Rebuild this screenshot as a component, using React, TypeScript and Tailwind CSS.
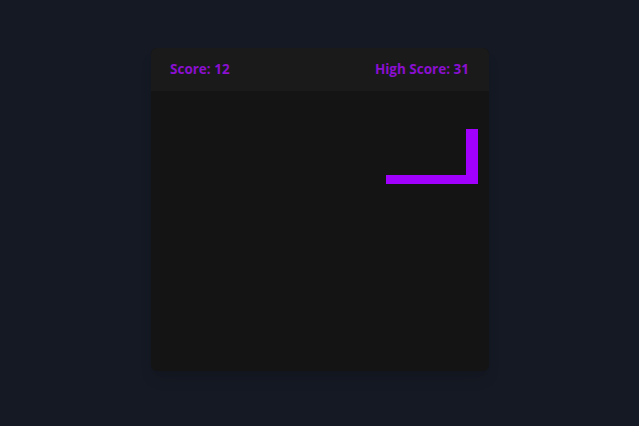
export default function App() {
  return (
    <div className="flex h-[426px] w-[639px] items-start justify-center bg-[#151923] pt-[48px] font-['Open_Sans',sans-serif]">
      <div className="ml-[1px] flex h-[323px] w-[338px] flex-col overflow-hidden rounded-md bg-[#141414] shadow-lg">
        {/* Header */}
        <div className="flex h-[43px] items-center justify-between bg-[#1a1a1a] pl-[19px] pr-[20px] text-[13.5px] font-bold text-[#8a0fd0]">
          <span>Score: 12</span>
          <span>High Score: 31</span>
        </div>
        {/* Board */}
        <div className="relative flex-1">
          <div className="absolute left-[315px] top-[38px] h-[55px] w-[12px] bg-[#a100ff]" />
          <div className="absolute left-[235px] top-[84px] h-[9px] w-[92px] bg-[#a100ff]" />
        </div>
      </div>
    </div>
  );
}
